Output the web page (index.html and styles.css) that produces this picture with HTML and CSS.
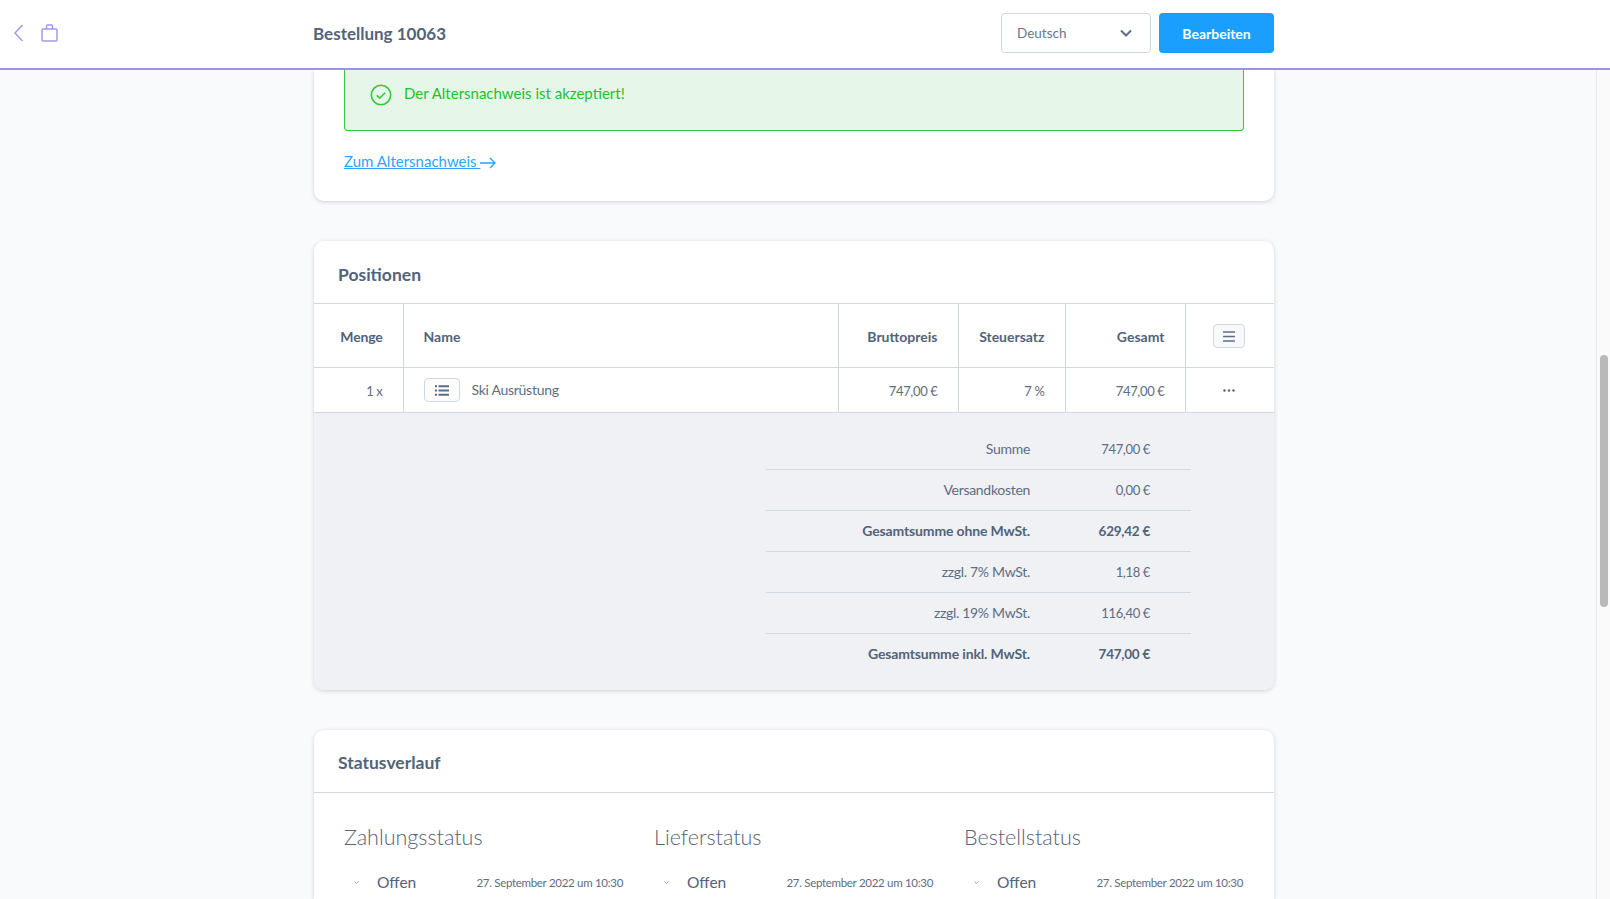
FILE: index.html
```html
<!DOCTYPE html>
<html lang="de">
<head>
    <meta charset="UTF-8">
    <title>Bestellung 10063</title>
    <link rel="stylesheet" href="styles.css">
</head>
<body>
    <!-- Top bar -->
    <header class="topbar">
        <div class="topbar-nav">
            <svg class="icon-back" width="10" height="18" viewBox="0 0 10 18"><path d="M8.500 1 1 9l7.500 8"/></svg>
            <svg class="icon-bag" width="17" height="18" viewBox="0 0 17 18"><path d="M2 5h13a1 1 0 0 1 1 1v10a1 1 0 0 1-1 1H2a1 1 0 0 1-1-1V6a1 1 0 0 1 1-1zM5.500 5V2a1 1 0 0 1 1-1h4a1 1 0 0 1 1 1v3"/></svg>
        </div>
        <div class="topbar-title">Bestellung 10063</div>
        <div class="lang-select">
            <span>Deutsch</span>
            <svg width="12" height="8" viewBox="0 0 12 8"><path d="m1 1.500 5 5 5-5"/></svg>
        </div>
        <button class="btn-primary">Bearbeiten</button>
    </header>

    <div class="page">
        <main class="content">
            <!-- Age verification -->
            <section class="card card-age">
                <div class="alert">
                    <svg width="22" height="22" viewBox="0 0 22 22"><circle cx="11" cy="11" r="9.700"/><path d="m6.800 11.300 2.900 2.800 5.500-5.400"/></svg>
                    <span class="alert-text">Der Altersnachweis ist akzeptiert!</span>
                </div>
                <a class="link" href="#">Zum Altersnachweis <svg width="16" height="12" viewBox="0 0 16 12"><path d="M0 6h15M10 1l5 5-5 5"/></svg></a>
            </section>

            <!-- Positions -->
            <section class="card">
                <h2 class="card-title">Positionen</h2>
                <table class="positions">
                    <thead>
                        <tr>
                            <th class="col-qty">Menge</th>
                            <th class="col-name">Name</th>
                            <th class="col-price">Bruttopreis</th>
                            <th class="col-tax">Steuersatz</th>
                            <th class="col-total">Gesamt</th>
                            <th class="col-action">
                                <span class="btn-icon btn-menu">
                                    <svg width="12" height="11" viewBox="0 0 12 11"><path d="M0 1h12M0 5.500h12M0 10h12"/></svg>
                                </span>
                            </th>
                        </tr>
                    </thead>
                    <tbody>
                        <tr>
                            <td class="col-qty num">1 x</td>
                            <td class="col-name">
                                <span class="name-cell">
                                    <span class="btn-icon btn-list">
                                        <svg width="14" height="11" viewBox="0 0 14 11"><path d="M3.500 1.250H14M3.500 5.500H14M3.500 9.750H14M0 1.250h2M0 5.500h2M0 9.750h2"/></svg>
                                    </span>
                                    <span class="name-text">Ski Ausrüstung</span>
                                </span>
                            </td>
                            <td class="col-price num">747,00 €</td>
                            <td class="col-tax num">7 %</td>
                            <td class="col-total num">747,00 €</td>
                            <td class="col-action">
                                <svg width="12" height="3" viewBox="0 0 12 3"><circle cx="1.500" cy="1.500" r="1.200"/><circle cx="6" cy="1.500" r="1.200"/><circle cx="10.500" cy="1.500" r="1.200"/></svg>
                            </td>
                        </tr>
                    </tbody>
                </table>
                <div class="summary">
                    <div class="summary-row"><span>Summe</span><span class="num">747,00 €</span></div>
                    <div class="summary-row"><span>Versandkosten</span><span class="num">0,00 €</span></div>
                    <div class="summary-row strong"><span>Gesamtsumme ohne MwSt.</span><span class="num">629,42 €</span></div>
                    <div class="summary-row"><span>zzgl. 7% MwSt.</span><span class="num">1,18 €</span></div>
                    <div class="summary-row"><span>zzgl. 19% MwSt.</span><span class="num">116,40 €</span></div>
                    <div class="summary-row strong"><span>Gesamtsumme inkl. MwSt.</span><span class="num">747,00 €</span></div>
                </div>
            </section>

            <!-- Status history -->
            <section class="card card-status">
                <h2 class="card-title">Statusverlauf</h2>
                <div class="status-grid">
                    <div class="status-col">
                        <h3>Zahlungsstatus</h3>
                        <div class="status-row">
                            <svg width="5" height="3" viewBox="0 0 5 3"><path d="m.5.5 2 2 2-2"/></svg>
                            <span class="status-name">Offen</span>
                            <span class="status-date">27. September 2022 um 10:30</span>
                        </div>
                    </div>
                    <div class="status-col">
                        <h3>Lieferstatus</h3>
                        <div class="status-row">
                            <svg width="5" height="3" viewBox="0 0 5 3"><path d="m.5.5 2 2 2-2"/></svg>
                            <span class="status-name">Offen</span>
                            <span class="status-date">27. September 2022 um 10:30</span>
                        </div>
                    </div>
                    <div class="status-col">
                        <h3>Bestellstatus</h3>
                        <div class="status-row">
                            <svg width="5" height="3" viewBox="0 0 5 3"><path d="m.5.5 2 2 2-2"/></svg>
                            <span class="status-name">Offen</span>
                            <span class="status-date">27. September 2022 um 10:30</span>
                        </div>
                    </div>
                </div>
            </section>
        </main>

        <div class="scrollbar"><div class="scrollbar-thumb"></div></div>
    </div>
</body>
</html>
```

FILE: styles.css
```css
/* Basic Reset */
* {
    margin: 0;
    padding: 0;
    box-sizing: border-box;
}

body {
    font-family: 'Lato', 'Open Sans', sans-serif;
    background-color: #f9fafc;
    color: #5d6d82;
    height: 100vh;
    overflow: hidden;
    display: flex;
    flex-direction: column;
}

svg {
    display: block;
    fill: none;
}

/* Top Bar */
.topbar {
    flex: none;
    height: 70px;
    display: flex;
    align-items: center;
    background-color: #fff;
    border-bottom: 2px solid #9f90ee;
    padding-bottom: 2px;
}

.topbar-nav {
    width: 313px;
    padding-left: 14px;
    display: flex;
    align-items: center;
    gap: 17px;
}

.topbar-nav svg {
    stroke: #a797f0;
    stroke-width: 1.5;
}

.topbar-title {
    width: 688px;
    margin-top: 1px;
    font-size: 17px;
    font-weight: 700;
    color: #52637a;
}

.lang-select {
    width: 150px;
    height: 40px;
    margin-right: 8px;
    padding: 0 18px 1px 15px;
    display: flex;
    align-items: center;
    justify-content: space-between;
    border: 1px solid #cfd8e3;
    border-radius: 4px;
    font-size: 13.5px;
    color: #68778b;
}

.lang-select svg {
    stroke: #5d6d82;
    stroke-width: 2;
    margin-top: 1px;
}

.btn-primary {
    width: 115px;
    height: 40px;
    border: none;
    border-radius: 4px;
    background-color: #1a9fff;
    color: #fff;
    font-family: inherit;
    font-size: 14px;
    font-weight: 700;
}

/* Page */
.page {
    flex: 1;
    display: flex;
    min-height: 0;
}

.content {
    flex: 1;
    padding-left: 314px;
    display: flex;
    flex-direction: column;
    overflow: hidden;
}

.scrollbar {
    flex: none;
    width: 14px;
    padding: 285px 2px 0 3px;
    background-color: #fafafa;
    border-left: 1px solid #e4e6e9;
}

.scrollbar-thumb {
    height: 252px;
    border-radius: 4px;
    background-color: #b9b9b9;
}

/* Cards */
.card {
    flex: none;
    width: 960px;
    margin-bottom: 40px;
    background-color: #fff;
    border-radius: 10px;
    box-shadow: 0 1px 4px rgba(60, 70, 90, 0.22);
    overflow: hidden;
}

.card-age {
    height: 131px;
    padding: 0 30px;
    border-radius: 0 0 10px 10px;
}

/* Last card runs on below the window */
.card-status {
    flex: 1;
    min-height: 0;
    margin-bottom: 0;
    border-radius: 10px 10px 0 0;
}

.card-title {
    height: 62px;
    padding: 4px 0 0 24px;
    display: flex;
    align-items: center;
    font-size: 17.5px;
    font-weight: 700;
    color: #52637a;
}

.card-status .card-title {
    padding-top: 3px;
}

/* Alert */
.alert {
    height: 61px;
    padding: 0 0 13px 25px;
    display: flex;
    align-items: center;
    gap: 12px;
    background-color: #e6f7e9;
    border: 1px solid #35c93c;
    border-top: none;
    border-radius: 0 0 4px 4px;
    font-size: 15px;
    color: #22c12c;
}

.alert svg {
    margin-top: 2px;
    stroke: #35c93c;
    stroke-width: 1.600;
}

.alert-text {
    margin-bottom: 2px;
}

.link {
    display: inline-block;
    margin-top: 21px;
    font-size: 15px;
    color: #2ea3ff;
}

.link svg {
    display: inline-block;
    vertical-align: -2px;
    stroke: #2ea3ff;
    stroke-width: 1.400;
}

/* Positions Table */
.positions {
    width: 960px;
    table-layout: fixed;
    border-collapse: collapse;
    font-size: 14px;
}

.positions th,
.positions td {
    border: 1px solid #cfd8e3;
    padding: 0 20px;
    text-align: right;
}

.positions tr > :first-child {
    border-left: none;
}

.positions tr > :last-child {
    border-right: none;
}

.positions th {
    height: 64px;
    padding-top: 1px;
    font-weight: 700;
    color: #52637a;
}

.positions td {
    height: 45px;
}

.positions td.num {
    padding-top: 2px;
}

.col-qty { width: 89px; }
.col-price { width: 120px; }
.col-tax { width: 107px; }
.col-total { width: 120px; }
.col-action { width: 89px; }

th.col-qty {
    letter-spacing: -0.2px;
}

.positions .col-name {
    text-align: left;
}

.positions .col-action {
    padding: 0;
}

.positions .col-action > svg {
    margin-left: 37px;
    fill: #52637a;
}

.num {
    font-size: 13px;
    letter-spacing: -0.35px;
}

.name-text {
    margin-bottom: 2px;
    letter-spacing: -0.28px;
}

.btn-icon {
    display: flex;
    align-items: center;
    justify-content: center;
    background-color: #f8f9fb;
    border: 1px solid #cfd8e3;
    border-radius: 4px;
}

.btn-icon svg {
    stroke: #5d6d82;
}

.btn-menu {
    width: 32px;
    height: 24px;
    margin: 1px 0 0 27px;
}

.btn-menu svg {
    stroke-width: 1.600;
}

.btn-list {
    width: 36px;
    height: 24px;
    background-color: #fcfcfd;
}

.btn-list svg {
    stroke-width: 1.800;
}

.name-cell {
    display: flex;
    align-items: center;
    gap: 12px;
}

/* Summary */
.summary {
    padding: 16px 83px 15px 452px;
    background-color: #eff1f5;
    font-size: 14px;
    letter-spacing: -0.3px;
}

.summary-row {
    height: 41px;
    padding: 0 41px 2px 0;
    display: grid;
    grid-template-columns: 264px 120px;
    align-items: center;
    justify-items: end;
    border-bottom: 1px solid #cfd8e3;
}

.summary-row .num {
    margin-top: 1px;
}

.summary-row:last-child {
    border-bottom: none;
}

.summary-row.strong {
    font-weight: 700;
    letter-spacing: -0.15px;
    color: #52637a;
}

.summary-row.strong .num {
    font-size: 13.5px;
    letter-spacing: -0.25px;
}

/* Status */
.status-grid {
    padding: 29px 30px 0;
    display: grid;
    grid-template-columns: repeat(3, 280px);
    column-gap: 30px;
    border-top: 1px solid #cfd8e3;
}

.status-col h3 {
    font-size: 21.5px;
    font-weight: 300;
    line-height: 30px;
    color: #52637a;
}

.status-row {
    margin-top: 21px;
    display: flex;
    align-items: center;
}

.status-row svg {
    margin: 0 18px 0 10px;
    stroke: #9aa6b5;
}

.status-name {
    font-size: 15.5px;
    color: #52637a;
}

.status-date {
    margin: 0 1px 0 auto;
    font-size: 11.5px;
    letter-spacing: -0.3px;
}
```
